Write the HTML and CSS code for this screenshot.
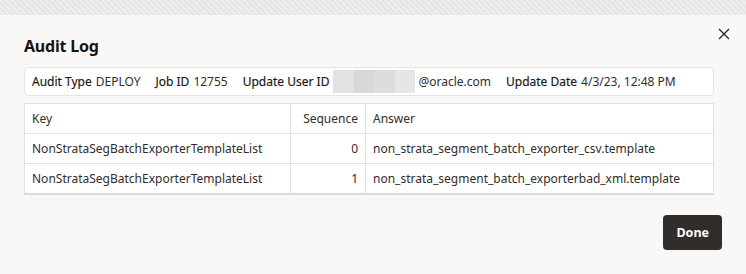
FILE: index.html
```html
<!DOCTYPE html>
<html lang="en">
<head>
    <meta charset="UTF-8">
    <title>Audit Log</title>
    <link rel="stylesheet" href="styles.css">
</head>
<body>
    <div class="backdrop"></div>
    <div class="dialog">
        <div class="dialog-header">
            <h1 class="title">Audit Log</h1>
            <button class="close-btn" aria-label="Close">
                <svg width="12" height="12" viewBox="0 0 12 12">
                    <path d="M1 1 L11 11 M11 1 L1 11" stroke="#2b2b2b" stroke-width="1.4" fill="none"/>
                </svg>
            </button>
        </div>

        <div class="info-bar">
            <span class="info-item"><span class="label">Audit Type</span> DEPLOY</span>
            <span class="info-item"><span class="label">Job ID</span> 12755</span>
            <span class="info-item"><span class="label">Update User ID</span>
                <span class="blurred"><i></i><i></i><i></i><i></i></span>@oracle.com</span>
            <span class="info-item"><span class="label">Update Date</span> 4/3/23, 12:48 PM</span>
        </div>

        <table class="audit-table">
            <thead>
                <tr>
                    <th class="col-key">Key</th>
                    <th class="col-seq">Sequence</th>
                    <th>Answer</th>
                </tr>
            </thead>
            <tbody>
                <tr>
                    <td>NonStrataSegBatchExporterTemplateList</td>
                    <td class="col-seq">0</td>
                    <td>non_strata_segment_batch_exporter_csv.template</td>
                </tr>
                <tr>
                    <td>NonStrataSegBatchExporterTemplateList</td>
                    <td class="col-seq">1</td>
                    <td>non_strata_segment_batch_exporterbad_xml.template</td>
                </tr>
            </tbody>
        </table>

        <div class="footer">
            <button class="done-btn">Done</button>
        </div>
    </div>
</body>
</html>
```

FILE: styles.css
```css
body {
    margin: 0;
    font-family: "Noto Sans", Arial, sans-serif;
    font-size: 12px;
    color: #312d2a;
    background: #f9f8f6;
}

.backdrop {
    height: 15px;
    background: repeating-linear-gradient(45deg, #e6e5e3 0 2px, #eeedeb 2px 4px);
}

.dialog {
    padding: 0 32px 0 24px;
}

.dialog-header {
    display: flex;
    justify-content: space-between;
    align-items: flex-start;
    height: 52px;
}

.title {
    margin: 20px 0 0 0;
    font-size: 16px;
    font-weight: 700;
    letter-spacing: -0.2px;
    color: #161513;
}

.close-btn {
    margin: 7px -22px 0 0;
    width: 24px;
    height: 24px;
    border: none;
    background: none;
    padding: 0;
    display: flex;
    align-items: center;
    justify-content: center;
    cursor: pointer;
}

.info-bar {
    display: flex;
    align-items: center;
    gap: 15px;
    height: 27px;
    padding: 0 7px;
    background: #fff;
    border: 1px solid #e6e4e1;
    border-radius: 5px;
}

.info-item {
    display: flex;
    align-items: center;
    white-space: nowrap;
}

.label {
    color: #161513;
    -webkit-text-stroke: 0.15px #161513;
    margin-right: 4px;
}

.blurred {
    display: inline-flex;
    width: 82px;
    height: 23px;
    margin: 0 3px 0 0;
}

.blurred i {
    flex: 1;
    background: #e2e2e2;
}

.blurred i:nth-child(2) { background: #d8d8d8; }
.blurred i:nth-child(3) { background: #dddddd; }
.blurred i:nth-child(4) { background: #e6e6e6; }

.audit-table {
    width: 100%;
    margin-top: 7px;
    border-collapse: collapse;
    background: #fff;
    border: 1px solid #e4e2df;
    border-bottom: 2px solid #dcdad7;
}

.audit-table th,
.audit-table td {
    height: 29px;
    padding: 0 7px;
    text-align: left;
    font-weight: 400;
    border-bottom: 1px solid #e4e2df;
    border-right: 1px solid #e4e2df;
    white-space: nowrap;
}

.audit-table .col-key {
    width: 251px;
}

.audit-table .col-seq {
    width: 60px;
    text-align: right;
}

.footer {
    display: flex;
    justify-content: flex-end;
    margin: 20px -8px 0 0;
}

.done-btn {
    background: #312d2a;
    color: #fff;
    border: none;
    border-radius: 4px;
    height: 35px;
    padding: 0 13px;
    font-family: inherit;
    font-size: 12.5px;
    font-weight: 700;
    cursor: pointer;
}
```
